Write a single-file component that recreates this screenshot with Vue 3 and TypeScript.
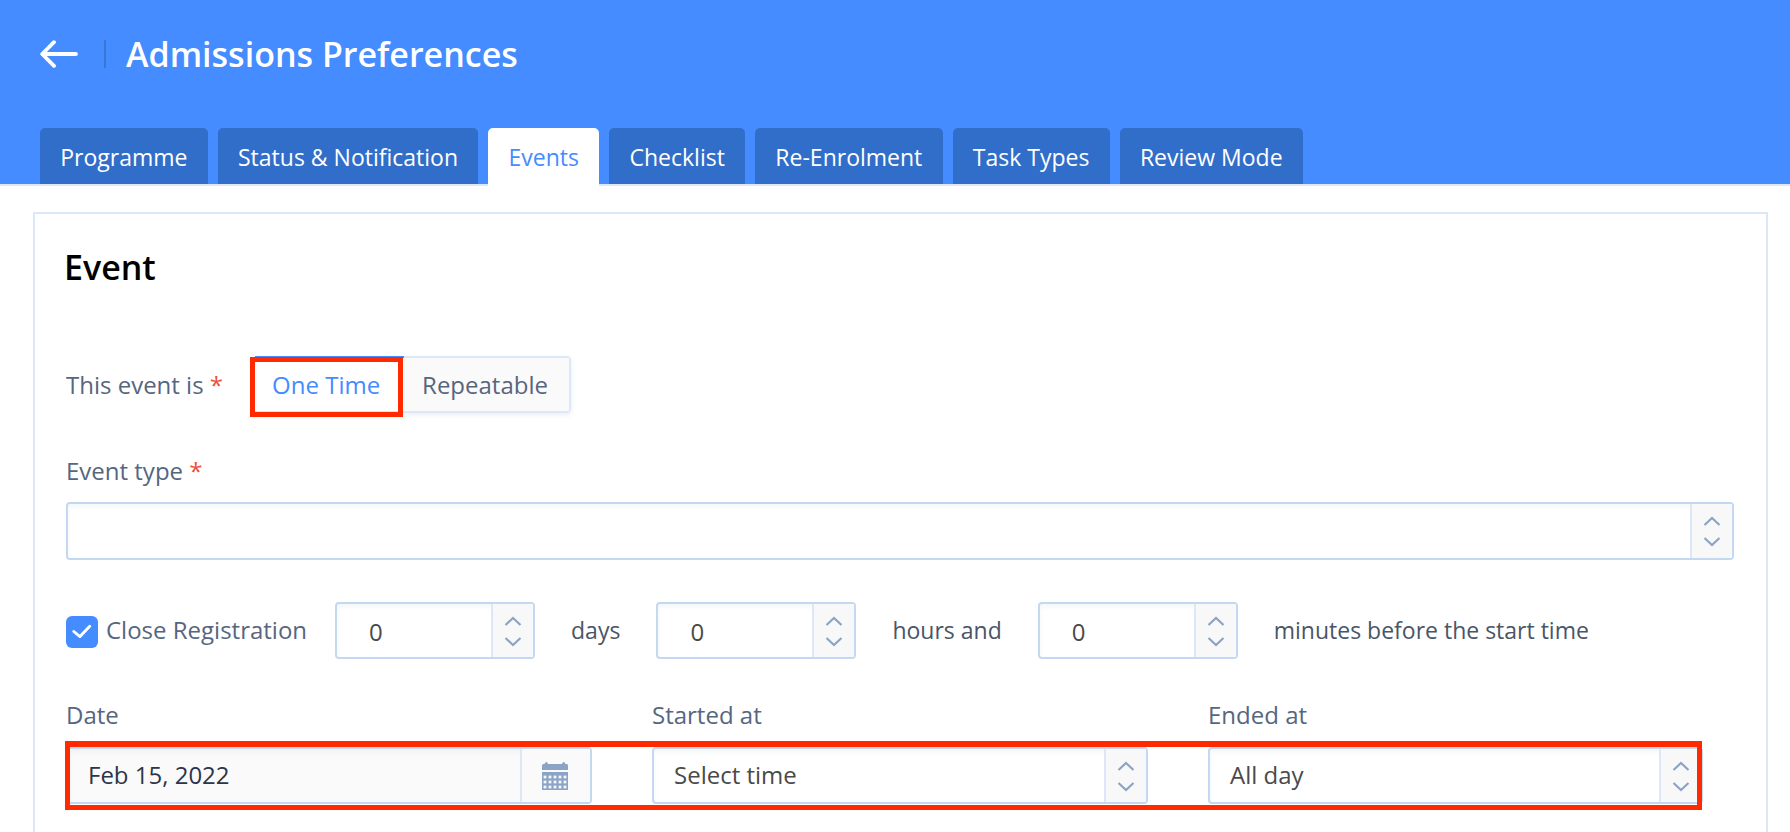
<script setup lang="ts">
const tabs: { label: string; active?: boolean }[] = [
  { label: 'Programme' },
  { label: 'Status & Notification' },
  { label: 'Events', active: true },
  { label: 'Checklist' },
  { label: 'Re-Enrolment' },
  { label: 'Task Types' },
  { label: 'Review Mode' },
]
const durations = [
  { value: '0', unit: 'days' },
  { value: '0', unit: 'hours and' },
  { value: '0', unit: 'minutes before the start time' },
]
const dotColumns = [3, 8, 13, 18, 23]
const dotRows = [15, 20, 25]
</script>

<template>
  <div class="page">
    <header class="header">
      <div class="title-row">
        <svg class="back" width="38" height="28" viewBox="0 0 38 28" fill="none" stroke="#fff" stroke-width="3.8" stroke-linecap="round" stroke-linejoin="round">
          <path d="M36 14H2.2M14 2.2 2.2 14 14 25.8" />
        </svg>
        <span class="divider"></span>
        <h1 class="title">Admissions Preferences</h1>
      </div>
      <nav class="tabs">
        <a v-for="t in tabs" :key="t.label" class="tab" :class="{ active: t.active }"><span class="tab-text">{{ t.label }}</span></a>
      </nav>
    </header>

    <main class="card">
      <h2 class="card-title">Event</h2>

      <div class="occurrence">
        <span class="label">This event is <b class="req">*</b></span>
        <div class="toggle">
          <span class="opt on">One Time</span>
          <span class="opt">Repeatable</span>
        </div>
      </div>

      <label class="label type-label">Event type <b class="req">*</b></label>
      <div class="field type-field">
        <span class="value"></span>
        <span class="addon">
          <svg class="chev" width="18" height="31" viewBox="0 0 18 31" fill="none" stroke="#8ba4c6" stroke-width="2.2">
            <path d="M1.5 9 9 2l7.5 7M1.5 22 9 29l7.5-7" />
          </svg>
        </span>
      </div>

      <div class="close-row">
        <span class="check-wrap">
          <span class="check">
            <svg width="20" height="16" viewBox="0 0 20 16" fill="none" stroke="#fff" stroke-width="2.9" stroke-linecap="round" stroke-linejoin="round">
              <path d="M1.8 7.5 8 12.6 17.7 2.3" />
            </svg>
          </span>
          <span class="label">Close Registration</span>
        </span>
        <template v-for="d in durations" :key="d.unit">
          <div class="field num">
            <span class="value zero">{{ d.value }}</span>
            <span class="addon">
              <svg class="chev" width="18" height="31" viewBox="0 0 18 31" fill="none" stroke="#8ba4c6" stroke-width="2.2">
                <path d="M1.5 9 9 2l7.5 7M1.5 22 9 29l7.5-7" />
              </svg>
            </span>
          </div>
          <span class="unit">{{ d.unit }}</span>
        </template>
      </div>

      <div class="when">
        <div class="col date-col">
          <label class="label">Date</label>
          <div class="field grey">
            <span class="value dark">Feb 15, 2022</span>
            <span class="addon cal-addon">
              <svg width="26" height="28" viewBox="0 0 26 28">
                <path fill="#8ba4c6" d="M1.5 2H2.6C3 .8 3.6 0 4.3 0S5.7.8 6 2h14c.4-1.200 1-2 1.700-2s1.400.8 1.700 2h1.100A1.500 1.500 0 0 1 26 3.500V8H0V3.500A1.500 1.500 0 0 1 1.500 2zM0 10h26v18H0z" />
                <g fill="#f4f6fa">
                  <template v-for="y in dotRows" :key="y">
                    <rect v-for="x in dotColumns" :key="x" :x="x - 1.4" :y="y - 1.4" width="2.8" height="2.8" />
                  </template>
                </g>
              </svg>
            </span>
          </div>
        </div>
        <div class="col start-col">
          <label class="label">Started at</label>
          <div class="field">
            <span class="value">Select time</span>
            <span class="addon">
              <svg class="chev" width="18" height="31" viewBox="0 0 18 31" fill="none" stroke="#8ba4c6" stroke-width="2.2">
                <path d="M1.5 9 9 2l7.5 7M1.5 22 9 29l7.5-7" />
              </svg>
            </span>
          </div>
        </div>
        <div class="col end-col">
          <label class="label">Ended at</label>
          <div class="field">
            <span class="value">All day</span>
            <span class="addon">
              <svg class="chev" width="18" height="31" viewBox="0 0 18 31" fill="none" stroke="#8ba4c6" stroke-width="2.2">
                <path d="M1.5 9 9 2l7.5 7M1.5 22 9 29l7.5-7" />
              </svg>
            </span>
          </div>
        </div>
      </div>
    </main>

    <div class="mark mark-one"></div>
    <div class="mark mark-row"></div>
  </div>
</template>

<style>
html, body { margin: 0; overflow: hidden; background: #fff; }
</style>

<style scoped>
.page {
  position: relative;
  height: 832px;
  width: 1790px;
  overflow: hidden;
  background: #fff;
  font-family: "Open Sans", sans-serif;
  font-size: 24px;
  color: #56667f;
}
.header {
  height: 184px;
  background: #448cff;
  border-bottom: 2px solid #dce8f7;
  display: flex;
  flex-direction: column;
}
.title-row {
  height: 128px;
  padding: 40px 0 0 40px;
  box-sizing: border-box;
  display: flex;
  align-items: flex-start;
}
.back { display: block; }
.divider {
  width: 2px;
  height: 28px;
  margin: 0 20px 0 26px;
  background: #3a76d6;
}
.title {
  margin: -6px 0 0;
  font-size: 34px;
  line-height: 40px;
  font-weight: 600;
  color: #fff;
}
.tabs {
  display: flex;
  gap: 10px;
  padding-left: 40px;
  height: 56px;
}
.tab {
  display: flex;
  align-items: center;
  padding: 0 20.25px;
  background: #316ec9;
  color: #fff;
  border-radius: 5px 5px 0 0;
  height: 56px;
  white-space: nowrap;
  font-size: 23px;
}
.tab-text { padding-top: 2px; }
.tab.active {
  background: #fff;
  color: #448cff;
  height: 58px;
}
.tab.active .tab-text { padding-top: 0; }
.card {
  margin: 26px 0 0 33px;
  width: 1735px;
  height: 700px;
  box-sizing: border-box;
  border: 2px solid #dce8f7;
  padding: 33px 0 0 31px;
}
.card-title {
  margin: 0 0 0 -2px;
  font-size: 34px;
  line-height: 40px;
  font-weight: 600;
  color: #000;
}
.occurrence {
  display: flex;
  align-items: center;
  gap: 30px;
  margin-top: 69px;
}
.label { color: #56667f; line-height: 30px; white-space: nowrap; }
.req { color: #f24c3d; font-weight: 400; }
.toggle {
  display: flex;
  height: 57px;
  box-sizing: border-box;
  border: 2px solid #dce8f7;
  border-radius: 4px;
  box-shadow: 0 2px 5px rgba(80, 110, 160, .12);
}
.opt {
  display: flex;
  align-items: center;
  padding: 0 21px 0 18px;
  background: #fafafa;
  white-space: nowrap;
}
.opt.on {
  background: #fff;
  color: #448cff;
  padding: 0 0 0 17px;
  width: 149px;
  box-sizing: border-box;
  border-top: 2px solid #448cff;
  margin-top: -2px;
}
.type-label { display: block; margin-top: 43px; }
.field {
  display: flex;
  height: 57px;
  box-sizing: border-box;
  border: 2px solid #c3d9f1;
  border-radius: 4px;
  background: #fff;
  box-shadow: inset 0 3px 4px rgba(120, 140, 170, .08);
}
.type-field {
  height: 58px;
  width: 1668px;
  margin-top: 16px;
}
.value {
  flex: 1;
  display: flex;
  align-items: center;
  padding: 0 0 2px 20px;
  color: #4a4a4a;
}
.value.dark { color: #2c3648; }
.value.zero { padding: 2px 0 0 32px; }
.addon {
  width: 40px;
  display: flex;
  align-items: center;
  justify-content: center;
  border-left: 2px solid #dce8f7;
  background: #f8f8f8;
}
.chev { display: block; margin-top: 1px; }
.close-row {
  display: flex;
  align-items: center;
  gap: 36px;
  margin-top: 42px;
}
.close-row .label, .unit { margin-top: -2px; }
.check-wrap {
  display: flex;
  align-items: center;
  gap: 8px;
  margin-right: -8px;
}
.check {
  width: 32px;
  height: 32px;
  border-radius: 6px;
  background: #448cff;
  display: flex;
  align-items: center;
  justify-content: center;
  margin-top: 2px;
}
.num { width: 200px; }
.unit { color: #4a5568; white-space: nowrap; font-size: 23px; }
.when {
  display: flex;
  gap: 60px;
  margin-top: 41px;
}
.col .label { display: block; margin-bottom: 17px; }
.date-col { width: 526px; }
.start-col { width: 496px; }
.end-col { width: 495px; }
.grey { background: #fafafa; }
.cal-addon { width: 70px; background: #fafafa; padding-right: 2px; box-sizing: border-box; }
.mark {
  position: absolute;
  box-sizing: border-box;
  border: 5px solid #ff2a00;
  pointer-events: none;
}
.mark-one { left: 250px; top: 357px; width: 153px; height: 60px; }
.mark-row { left: 65px; top: 741px; width: 1637px; height: 69px; border-width: 6px 5px 5px; }
</style>
